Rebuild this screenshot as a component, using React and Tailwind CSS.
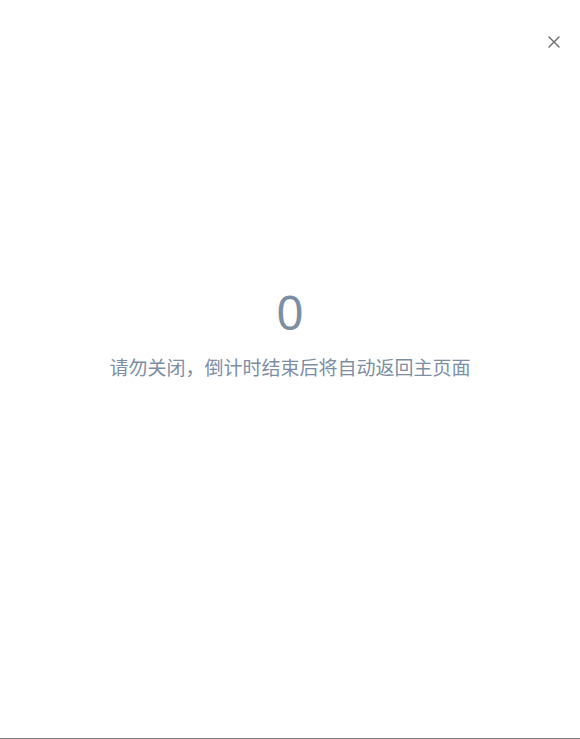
export default function App() {
  return (
    <div
      className="relative h-[739px] w-full bg-white border-b border-[#7a7a7a]"
      style={{ fontFamily: '"Noto Sans", "Noto Sans CJK SC", sans-serif' }}
    >
      <button className="absolute right-[16px] top-[32px] flex h-[20px] w-[20px] items-center justify-center text-[#6b6b6b]">
        <svg width="12" height="12" viewBox="0 0 12 12" fill="none" stroke="currentColor" strokeWidth="1.4" strokeLinecap="round">
          <path d="M1 1L11 11M11 1L1 11" />
        </svg>
      </button>

      <div className="flex flex-col items-center pt-[284px]">
        <div className="text-[48px] leading-[56px] font-normal text-[#7d8ea3]">0</div>
        <p className="mt-[15px] text-[19px] leading-[26px] font-normal text-[#7d8ea3]">
          请勿关闭，倒计时结束后将自动返回主页面
        </p>
      </div>
    </div>
  );
}
